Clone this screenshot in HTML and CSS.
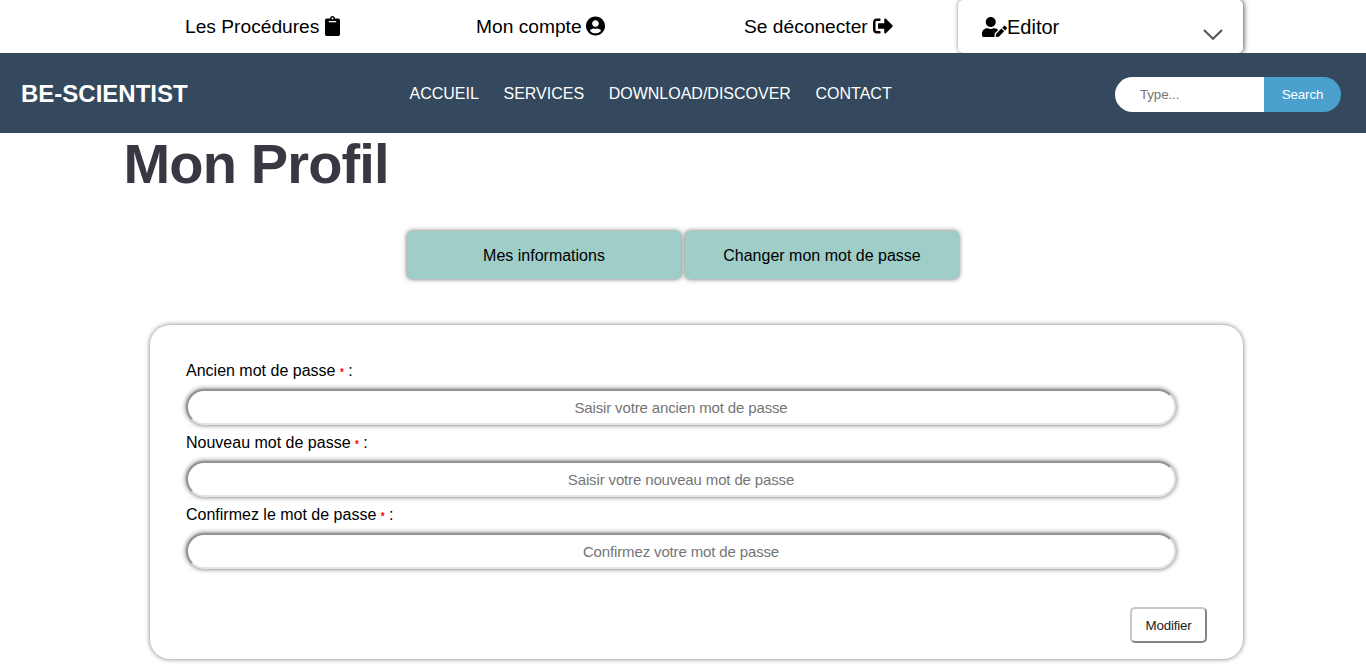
FILE: index.html
```html
<!DOCTYPE html>
<html lang="fr">
<head>
<meta charset="utf-8">
<title>Mon Profil</title>
<link rel="stylesheet" href="styles.css">
</head>
<body>
<header class="topbar">
  <a class="top-link procedures">Les Procédures
    <svg class="icon" width="15" height="20" viewBox="0 0 384 512"><path d="M384 112v352c0 26.500-21.500 48-48 48H48c-26.500 0-48-21.500-48-48V112c0-26.500 21.500-48 48-48h80c0-35.300 28.700-64 64-64s64 28.700 64 64h80c26.500 0 48 21.500 48 48zM192 40c-13.300 0-24 10.700-24 24s10.700 24 24 24 24-10.700 24-24-10.700-24-24-24m96 114v-20a6 6 0 0 0-6-6H102a6 6 0 0 0-6 6v20a6 6 0 0 0 6 6h180a6 6 0 0 0 6-6z" fill-rule="evenodd"/></svg>
  </a>
  <a class="top-link account">Mon compte
    <svg class="icon" width="19" height="20" viewBox="0 0 496 512"><path d="M248 8C111 8 0 119 0 256s111 248 248 248 248-111 248-248S385 8 248 8zm0 96c48.600 0 88 39.400 88 88s-39.400 88-88 88-88-39.400-88-88 39.400-88 88-88zm0 344c-58.700 0-111.300-26.600-146.500-68.200 18.800-35.400 55.600-59.800 98.500-59.800 2.400 0 4.800.4 7.100 1.100 13 4.200 26.600 6.900 40.900 6.900 14.300 0 28-2.700 40.900-6.900 2.300-.7 4.700-1.100 7.100-1.100 42.900 0 79.700 24.400 98.500 59.800C359.300 421.400 306.700 448 248 448z"/></svg>
  </a>
  <a class="top-link logout">Se déconecter
    <svg class="icon" width="20" height="20" viewBox="0 0 512 512"><path d="M497 273L329 441c-15 15-41 4.500-41-17v-96H152c-13.300 0-24-10.700-24-24v-96c0-13.300 10.700-24 24-24h136V88c0-21.400 25.900-32 41-17l168 168c9.300 9.400 9.300 24.600 0 34zM192 436v-40c0-6.600-5.400-12-12-12H96c-17.700 0-32-14.300-32-32V160c0-17.700 14.300-32 32-32h84c6.600 0 12-5.400 12-12V76c0-6.600-5.400-12-12-12H96c-53 0-96 43-96 96v192c0 53 43 96 96 96h84c6.600 0 12-5.400 12-12z"/></svg>
  </a>
  <div class="role">
    <svg class="icon role-icon" width="25" height="20" viewBox="0 0 640 512"><path d="M224 256c70.700 0 128-57.300 128-128S294.700 0 224 0 96 57.300 96 128s57.300 128 128 128zm89.600 32h-16.700c-22.200 10.200-46.900 16-72.900 16s-50.600-5.800-72.900-16h-16.700C60.200 288 0 348.200 0 422.400V464c0 26.500 21.500 48 48 48h274.900c-2.400-6.800-3.400-14-2.600-21.300l6.800-60.900 1.200-11.100 7.900-7.900 77.300-77.300c-24.500-27.700-60-45.500-99.900-45.500zm45.300 145.300l-6.800 61c-1.100 10.200 7.500 18.800 17.600 17.600l60.900-6.800 137.900-137.900-71.700-71.700-137.900 137.800zM633 268.900L595.100 231c-9.300-9.300-24.500-9.300-33.800 0l-37.800 37.800-4.100 4.100 71.800 71.700 41.800-41.800c9.300-9.400 9.300-24.500 0-33.900z"/></svg>
    <span class="role-name">Editor</span>
    <svg class="chevron" width="20" height="12" viewBox="0 0 20 12"><path d="M1 1L10 9.800L19 1"/></svg>
  </div>
</header>
<nav class="navbar">
  <a class="brand">BE-SCIENTIST</a>
  <div class="menu"><a>ACCUEIL</a><a>SERVICES</a><a>DOWNLOAD/DISCOVER</a><a>CONTACT</a></div>
  <form class="search">
    <input class="search-input" type="text" placeholder="Type...">
    <button class="search-button" type="button">Search</button>
  </form>
</nav>
<main>
  <h1 class="title">Mon Profil</h1>
  <div class="tabs"><button class="tab" type="button">Mes informations</button><button class="tab" type="button">Changer mon mot de passe</button></div>
  <form class="panel">
    <label class="label" for="old">Ancien mot de passe <span class="required">*</span> :</label>
    <input class="field" id="old" type="password" placeholder="Saisir votre ancien mot de passe">
    <label class="label" for="new">Nouveau mot de passe <span class="required">*</span> :</label>
    <input class="field" id="new" type="password" placeholder="Saisir votre nouveau mot de passe">
    <label class="label" for="confirm">Confirmez le mot de passe <span class="required">*</span> :</label>
    <input class="field" id="confirm" type="password" placeholder="Confirmez votre mot de passe">
    <button class="submit" type="button">Modifier</button>
  </form>
</main>
</body>
</html>
```
FILE: styles.css
```css
* { box-sizing: border-box; }
body {
  margin: 0;
  height: 664px;
  overflow: hidden;
  background: #fff;
  color: #000;
  font: 16px "Liberation Sans", Arial, sans-serif;
}
input, button { font-family: inherit; margin: 0; }
.topbar {
  display: grid;
  grid-template-columns: 291px 268px 214px 285px;
  height: 53px;
  padding-left: 185px;
  font-size: 19.2px;
}
.top-link { padding-top: 16px; line-height: 22px; white-space: nowrap; }
.icon { fill: currentColor; vertical-align: -3px; }
.account .icon, .logout .icon { margin-left: -0.5px; }
.role {
  display: flex;
  align-items: flex-start;
  padding: 16px 20px 0 24px;
  border-radius: 5px;
  box-shadow: 1px 0 5px #555;
  line-height: 22px;
}
.role-icon { margin-top: 0.5px; }
.role-name { flex: 1; font-size: 20px; }
.chevron { margin-top: 13px; fill: none; stroke: #555; stroke-width: 2; }
.navbar {
  position: relative;
  display: grid;
  grid-template-columns: 388.5px 705.5px 226px;
  align-items: center;
  height: 80px;
  padding-left: 21px;
  background: #34495e;
  color: #fff;
}
.brand { padding-top: 2px; font-size: 24px; font-weight: bold; }
.menu { display: flex; gap: 24.6px; padding-top: 2px; }
.search { display: flex; height: 35px; margin-top: 3px; }
.search-input {
  width: 149px;
  padding: 0 0 0 25px;
  border: 0;
  border-radius: 18px 0 0 18px;
  font-size: 13.333px;
  letter-spacing: -0.1px;
}
.search-button {
  width: 77px;
  padding: 0;
  border: 0;
  border-radius: 0 18px 18px 0;
  background: #4aa0cd;
  color: #fff;
  font-size: 13.333px;
  letter-spacing: -0.15px;
}
.title {
  margin: 0 0 0 123.5px;
  height: 62px;
  color: #373842;
  font-size: 56px;
  letter-spacing: -0.85px;
  line-height: 62px;
}
.tabs { display: flex; justify-content: center; gap: 4px; margin-top: 36px; }
.tab {
  width: 274px;
  height: 48px;
  padding: 2px 0 0;
  border: 0;
  border-radius: 5px;
  background: #9fcdc8;
  box-shadow: 0 0 5px #666;
  color: #000;
  font-size: 16px;
}
.panel {
  display: flex;
  flex-direction: column;
  width: 1093px;
  height: 334px;
  margin: 46px 0 0 150px;
  padding: 36px;
  border-radius: 20px;
  box-shadow: 0 0 5px #777;
}
.label { flex: none; height: 28px; line-height: 20px; }
.required { color: red; font-size: 10px; font-weight: bold; }
.field {
  flex: none;
  width: 990px;
  height: 36px;
  margin-bottom: 8px;
  padding: 0;
  border: 2px solid;
  border-color: #949494 #e3e3e3 #e3e3e3 #949494;
  border-radius: 20px;
  background: #fff;
  box-shadow: 0 0 5px #666;
  font-size: 15px;
  letter-spacing: -0.14px;
  text-align: center;
}
.submit {
  flex: none;
  align-self: flex-end;
  width: 77px;
  height: 36px;
  margin-top: 30px;
  padding: 0;
  border: 2px solid;
  border-color: #c8c8c8 #858585 #858585 #c8c8c8;
  border-radius: 5px;
  background: #fff;
  color: #222;
  font-size: 13.333px;
  letter-spacing: -0.2px;
}
```
